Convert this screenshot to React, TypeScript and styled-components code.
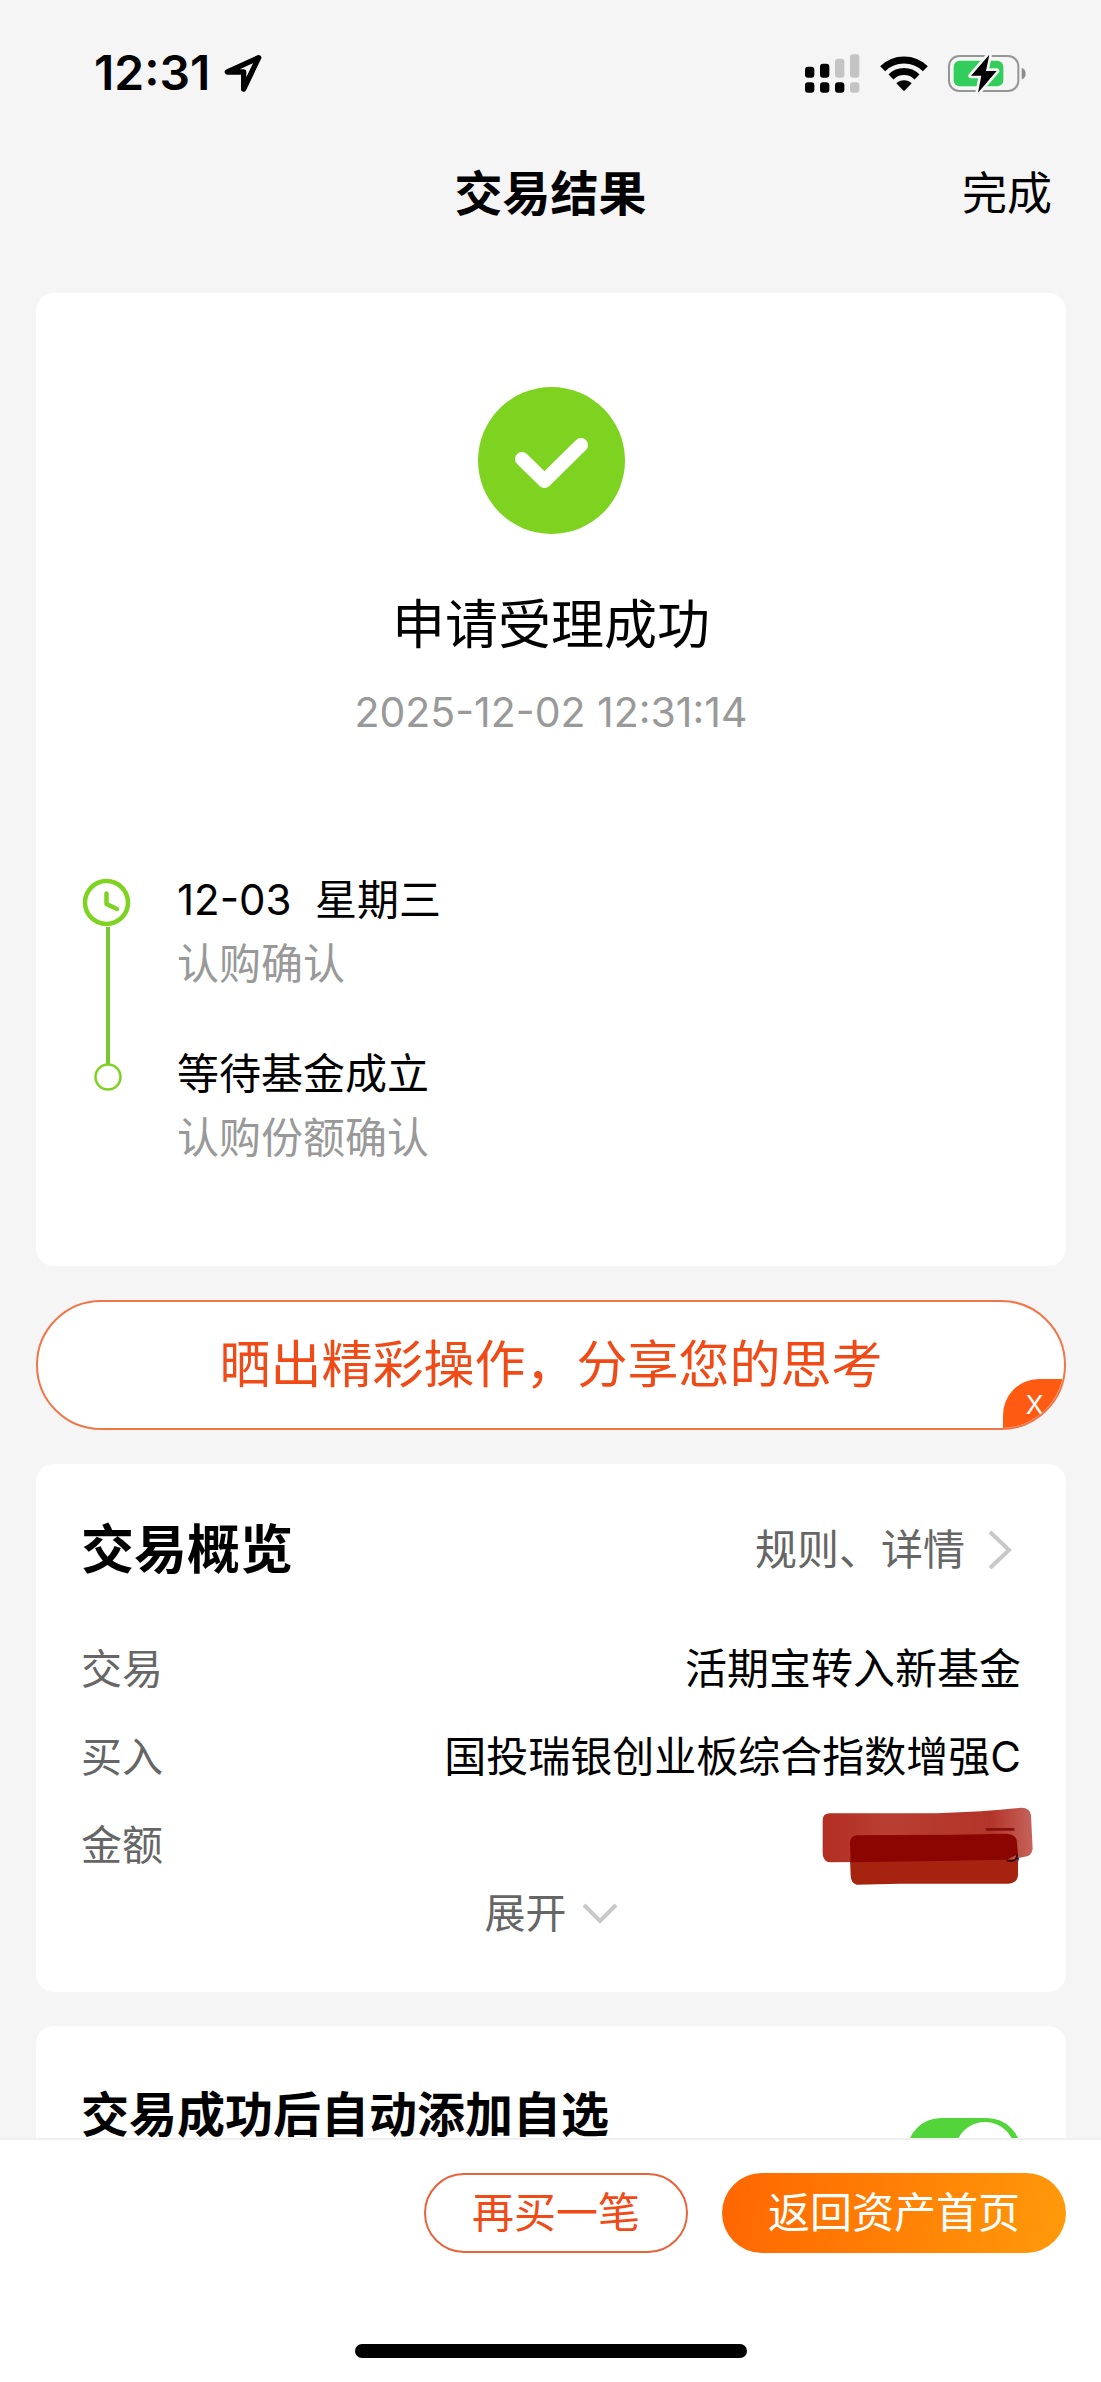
import React from 'react';
import styled, { createGlobalStyle } from 'styled-components';

const GlobalStyle = createGlobalStyle`
  *, *::before, *::after { box-sizing: border-box; }
  html, body { margin: 0; background: #f5f5f5; }
  body, button, input {
    font-family: Inter, "Noto Sans CJK SC", sans-serif;
    color: #000;
  }
  h1, h2, p, ol, dl, dd { margin: 0; padding: 0; }
  button { margin: 0; padding: 0; border: 0; background: none; cursor: pointer; }
  svg { display: block; flex: none; }
`;

const Screen = styled.div`
  display: flex;
  flex-direction: column;
  height: 100vh;
  overflow: hidden;
`;

const StatusBar = styled.div`
  display: flex;
  flex: none;
  align-items: center;
  justify-content: space-between;
  height: 146px;
  padding: 0 75px 0 94px;
`;

const StatusGroup = styled.div<{ $gap: number }>`
  display: flex;
  align-items: center;
  gap: ${(p) => p.$gap}px;
`;

const Clock = styled.span`
  font-size: 48px;
  font-weight: 600;
  line-height: 60px;
`;

const NavBar = styled.header`
  display: grid;
  flex: none;
  grid-template-columns: 1fr auto 1fr;
  align-items: center;
  height: 96px;
  padding: 0 49px;
`;

const NavTitle = styled.h1`
  grid-column: 2;
  font-size: 48px;
  font-weight: 700;
  line-height: 72px;
`;

const NavAction = styled.button`
  justify-self: end;
  font-size: 45px;
  line-height: 72px;
`;

const Content = styled.main`
  display: flex;
  flex: 1;
  flex-direction: column;
  gap: 34px;
  min-height: 0;
  padding: 51px 35px 0 36px;
  overflow: hidden;
`;

const Card = styled.section<{ $top: number; $bottom: number }>`
  flex: none;
  padding: ${(p) => p.$top}px 45px ${(p) => p.$bottom}px;
  border-radius: 18px;
  background: #fff;
`;

const Result = styled.div`
  display: flex;
  flex-direction: column;
  align-items: center;
`;

const ResultTitle = styled.h2`
  margin-top: 55px;
  font-size: 53px;
  font-weight: 400;
  line-height: 72px;
`;

const ResultTime = styled.time`
  margin-top: 21px;
  color: #999;
  font-size: 41px;
  line-height: 60px;
`;

const Timeline = styled.ol`
  margin-top: 126px;
  list-style: none;
`;

const Step = styled.li`
  display: flex;
  gap: 42px;
`;

const StepMarker = styled.div`
  display: flex;
  flex: none;
  flex-direction: column;
  align-items: center;
  width: 54px;
`;

const StepLine = styled.span`
  flex: 1;
  width: 4px;
  background: #78c832;
`;

const StepBody = styled.div<{ $last?: boolean }>`
  padding-bottom: ${(p) => (p.$last ? 0 : 46)}px;
`;

const StepText = styled.p<{ $muted?: boolean }>`
  color: ${(p) => (p.$muted ? '#999' : '#000')};
  font-size: 42px;
  line-height: 64px;
  white-space: pre;
`;

const Banner = styled.div`
  position: relative;
  display: flex;
  flex: none;
  height: 130px;
  overflow: hidden;
  border: 2px solid #f0764a;
  border-radius: 65px;
  background: #fff;
`;

const BannerAction = styled.button`
  flex: 1;
  color: #f04a17;
  font-size: 51px;
  line-height: 72px;
`;

const BannerClose = styled.button`
  position: absolute;
  right: -2px;
  bottom: -2px;
  width: 63px;
  height: 51px;
  border-radius: 36px 0 0 0;
  background: #ff5a12;
  color: #fff;
  font-size: 26px;
  font-weight: 400;
  line-height: 48px;
`;

const CardHead = styled.div`
  display: flex;
  align-items: center;
  justify-content: space-between;
`;

const CardTitle = styled.h2`
  font-size: 53px;
  font-weight: 700;
  line-height: 72px;
`;

const DetailLink = styled.a`
  display: flex;
  align-items: center;
  gap: 22px;
  padding-right: 8px;
  color: #666;
  font-size: 42px;
  line-height: 72px;
  text-decoration: none;
`;

const Facts = styled.dl`
  margin-top: 39px;
`;

const Fact = styled.div`
  display: flex;
  justify-content: space-between;
  font-size: 42px;
  line-height: 88px;
`;

const FactName = styled.dt`
  color: #666;
  font-size: 41px;
`;

const FactValue = styled.dd`
  position: relative;
`;

const Scribble = styled.svg`
  position: absolute;
  top: 6px;
  right: -13px;
`;

const Expand = styled.button`
  display: flex;
  align-items: center;
  justify-content: center;
  gap: 15px;
  width: 100%;
  color: #666;
  font-size: 41px;
  line-height: 48px;
`;

const SwitchRow = styled.label`
  display: flex;
  justify-content: space-between;
  min-height: 146px;
`;

const SwitchText = styled.span`
  font-size: 48px;
  font-weight: 700;
  line-height: 72px;
`;

const Switch = styled.input`
  position: relative;
  align-self: center;
  width: 114px;
  height: 68px;
  margin: 0;
  appearance: none;
  border-radius: 34px;
  background: #c8c8c8;

  &:checked { background: #53d43a; }

  &::after {
    content: '';
    position: absolute;
    top: 4px;
    left: 4px;
    width: 60px;
    height: 60px;
    border-radius: 50%;
    background: #fff;
  }

  &:checked::after { left: 48px; }
`;

const Footer = styled.footer`
  flex: none;
  padding: 33px 35px 24px 36px;
  border-top: 2px solid #efefef;
  background: #fff;
`;

const Actions = styled.div`
  display: flex;
  justify-content: flex-end;
  gap: 34px;
`;

const ActionButton = styled.button<{ $primary?: boolean }>`
  height: 80px;
  padding: 0 ${(p) => (p.$primary ? 46 : 46)}px;
  border: ${(p) => (p.$primary ? '0' : '2px solid #e8623a')};
  border-radius: 40px;
  background: ${(p) => (p.$primary ? 'linear-gradient(100deg, #ff6600, #ff9a0a)' : '#fff')};
  color: ${(p) => (p.$primary ? '#fff' : '#f04a17')};
  font-size: 42px;
  line-height: 60px;
`;

const HomeIndicator = styled.div`
  width: 392px;
  height: 14px;
  margin: 91px auto 0;
  border-radius: 7px;
  background: #000;
`;

const LocationIcon = () => (
  <svg width="39" height="39" viewBox="431 73 117 117" aria-hidden="true">
    <path
      d="M535 84 L441 127 H490 V178 Z"
      fill="none"
      stroke="#000"
      strokeWidth="16"
      strokeLinejoin="round"
    />
  </svg>
);

const SignalIcon = () => (
  <svg width="55" height="39" viewBox="75 70 165 117" aria-hidden="true">
    <g fill="#000">
      <rect x="75" y="108" width="28" height="33" rx="9" />
      <rect x="120" y="99" width="28" height="42" rx="9" />
      <rect x="75" y="155" width="28" height="31" rx="9" />
      <rect x="120" y="155" width="28" height="31" rx="9" />
      <rect x="165" y="155" width="28" height="31" rx="9" />
    </g>
    <g fill="#c4c4c4">
      <rect x="165" y="84" width="28" height="57" rx="9" />
      <rect x="210" y="71" width="28" height="70" rx="9" />
      <rect x="210" y="155" width="28" height="31" rx="9" />
    </g>
  </svg>
);

const WifiIcon = () => (
  <svg width="48" height="39" viewBox="301 70 144 117" aria-hidden="true">
    <g fill="none" stroke="#000" strokeWidth="21">
      <path d="M309 114 A91 91 0 0 1 437 114" />
      <path d="M334 139 A55 55 0 0 1 412 139" />
    </g>
    <path d="M350 158 A33 33 0 0 1 396 158 L376 179 Q373 182 370 179 Z" fill="#000" />
  </svg>
);

const BatteryIcon = () => (
  <svg width="78" height="39" viewBox="505 70 234 117" aria-hidden="true">
    <rect x="508" y="76" width="208" height="105" rx="31" fill="none" stroke="#969696" strokeWidth="6" />
    <path d="M726 112 Q738 116 738 129 Q738 142 726 146 Z" fill="#8c8c8c" />
    <rect x="522" y="90" width="149" height="77" rx="18" fill="#32cd5a" />
    <path
      d="M629 72 L574 135 H605 L595 186 L651 121 H619 Z"
      fill="#000"
      stroke="#f5f5f5"
      strokeWidth="16"
      strokeLinejoin="round"
      paintOrder="stroke"
    />
  </svg>
);

const SuccessIcon = () => (
  <svg width="147" height="147" viewBox="0 0 147 147" aria-hidden="true">
    <circle cx="73.5" cy="73.5" r="73.5" fill="#7ed321" />
    <path
      d="M44 72 L66.500 94 L103 58"
      fill="none"
      stroke="#fff"
      strokeWidth="14"
      strokeLinecap="round"
      strokeLinejoin="round"
    />
  </svg>
);

const ClockIcon = () => (
  <svg width="54" height="59" viewBox="0 0 54 59" aria-hidden="true">
    <g fill="none" stroke="#7ed321" strokeLinecap="round" strokeLinejoin="round">
      <circle cx="25.500" cy="34.500" r="21.500" strokeWidth="4.500" />
      <path d="M25.500 25.500 V36 L36 41" strokeWidth="4.500" />
    </g>
  </svg>
);

const DotIcon = () => (
  <svg width="54" height="64" viewBox="0 0 54 64" aria-hidden="true">
    <path d="M27 0 V23" stroke="#78c832" strokeWidth="4" />
    <circle cx="27" cy="35" r="12.500" fill="#fff" stroke="#7ed321" strokeWidth="2.500" />
  </svg>
);

const ChevronRight = () => (
  <svg width="26" height="40" viewBox="0 0 26 40" aria-hidden="true">
    <path d="M3 2 L22 20 L3 38" fill="none" stroke="#c8c8c8" strokeWidth="4" />
  </svg>
);

const ChevronDown = () => (
  <svg width="36" height="24" viewBox="0 0 36 24" aria-hidden="true">
    <path d="M2 4 L18 20 L34 4" fill="none" stroke="#c8c8c8" strokeWidth="4" />
  </svg>
);

const RedactionMark = () => (
  <Scribble width="212" height="80" viewBox="246 80 636 240" aria-hidden="true">
    <defs>
      <linearGradient id="brush" x1="0" x2="1" y1="0" y2="0">
        <stop offset="0" stopColor="#b02a1c" />
        <stop offset="0.300" stopColor="#b83a2e" />
        <stop offset="0.800" stopColor="#b23024" />
        <stop offset="1" stopColor="#c46058" />
      </linearGradient>
    </defs>
    <path
      d="M248 120 Q248 99 270 99 L590 99 Q740 94 845 82 Q870 82 873 105 L878 205 Q876 228 850 230 L800 240 L590 243 L270 246 Q250 244 248 220 Z"
      fill="url(#brush)"
      opacity="0.98"
    />
    <path d="M330 236 H834 V285 Q832 310 805 310 L480 310 L350 313 Q333 310 332 285 Z" fill="#a62310" />
    <path
      d="M330 188 Q330 168 350 165 L640 163 L800 160 Q826 162 830 180 L834 222 L800 238 L590 242 L332 246 Z"
      fill="#8b0600"
    />
    <path d="M738 147 H823" stroke="#84100a" strokeWidth="8" />
    <path d="M800 240 Q830 248 832 222" fill="none" stroke="#2a0505" strokeWidth="5" />
  </Scribble>
);

const steps = [
  { title: '12-03  星期三', note: '认购确认' },
  { title: '等待基金成立', note: '认购份额确认' },
];

export default function App() {
  return (
    <>
      <GlobalStyle />
      <Screen>
        <StatusBar>
          <StatusGroup $gap={14}>
            <Clock>12:31</Clock>
            <LocationIcon />
          </StatusGroup>
          <StatusGroup $gap={20}>
            <SignalIcon />
            <WifiIcon />
            <BatteryIcon />
          </StatusGroup>
        </StatusBar>
        <NavBar>
          <NavTitle>交易结果</NavTitle>
          <NavAction type="button">完成</NavAction>
        </NavBar>
        <Content>
          <Card $top={94} $bottom={96}>
            <Result>
              <SuccessIcon />
              <ResultTitle>申请受理成功</ResultTitle>
              <ResultTime dateTime="2025-12-02T12:31:14">2025-12-02 12:31:14</ResultTime>
            </Result>
            <Timeline>
              {steps.map((step, i) => {
                const last = i === steps.length - 1;
                return (
                  <Step key={step.title}>
                    <StepMarker>
                      {last ? <DotIcon /> : <ClockIcon />}
                      {!last && <StepLine />}
                    </StepMarker>
                    <StepBody $last={last}>
                      <StepText>{step.title}</StepText>
                      <StepText $muted>{step.note}</StepText>
                    </StepBody>
                  </Step>
                );
              })}
            </Timeline>
          </Card>
          <Banner>
            <BannerAction type="button">晒出精彩操作，分享您的思考</BannerAction>
            <BannerClose type="button">X</BannerClose>
          </Banner>
          <Card $top={50} $bottom={55}>
            <CardHead>
              <CardTitle>交易概览</CardTitle>
              <DetailLink href="#details">
                规则、详情
                <ChevronRight />
              </DetailLink>
            </CardHead>
            <Facts>
              <Fact>
                <FactName>交易</FactName>
                <FactValue>活期宝转入新基金</FactValue>
              </Fact>
              <Fact>
                <FactName>买入</FactName>
                <FactValue>国投瑞银创业板综合指数增强C</FactValue>
              </Fact>
              <Fact>
                <FactName>金额</FactName>
                <FactValue>
                  元
                  <RedactionMark />
                </FactValue>
              </Fact>
            </Facts>
            <Expand type="button">
              展开
              <ChevronDown />
            </Expand>
          </Card>
          <Card $top={53} $bottom={53}>
            <SwitchRow>
              <SwitchText>交易成功后自动添加自选</SwitchText>
              <Switch type="checkbox" role="switch" defaultChecked />
            </SwitchRow>
          </Card>
        </Content>
        <Footer>
          <Actions>
            <ActionButton type="button">再买一笔</ActionButton>
            <ActionButton type="button" $primary>
              返回资产首页
            </ActionButton>
          </Actions>
          <HomeIndicator />
        </Footer>
      </Screen>
    </>
  );
}
